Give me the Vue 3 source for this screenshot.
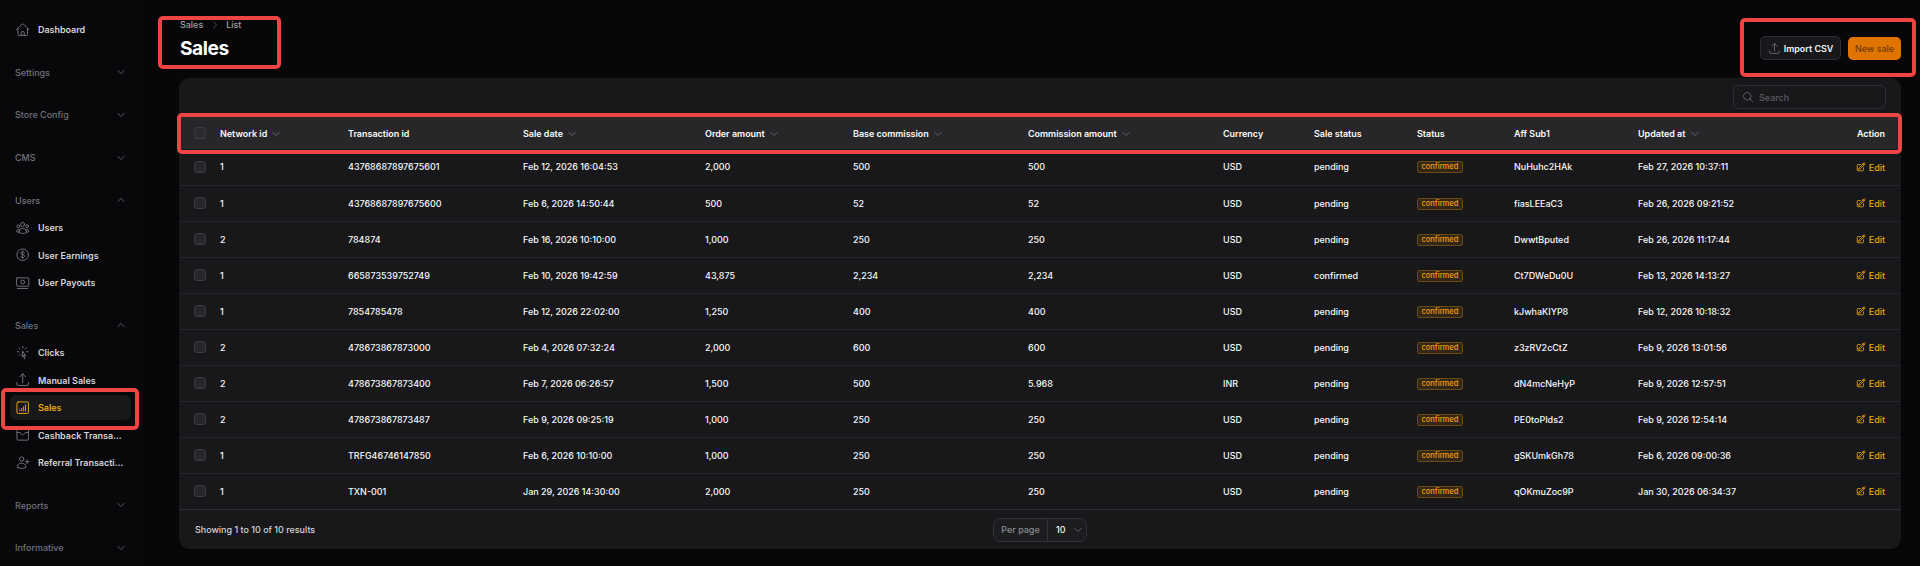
<template>
  <div class="layout">
    <aside class="sidebar">
      <div class="nav-item dash">
        <svg class="nav-icon" viewBox="0 0 24 24"><path :d="icons.home" /></svg>
        <span class="nav-text">Dashboard</span>
      </div>
      <div v-for="group in groups" :key="group.label" class="group">
        <div class="group-head">
          <span>{{ group.label }}</span>
          <svg class="chev" :class="{ up: group.items }" viewBox="0 0 24 24"><path d="M19.5 8.25l-7.5 7.5-7.5-7.5" /></svg>
        </div>
        <div v-for="item in group.items" :key="item.text" class="nav-item" :class="{ active: item.active }">
          <svg class="nav-icon" viewBox="0 0 24 24"><path :d="icons[item.icon]" /></svg>
          <span class="nav-text">{{ item.text }}</span>
        </div>
      </div>
    </aside>

    <main class="main">
      <header class="page-head">
        <div class="title-block">
          <div class="crumbs">
            <span>Sales</span>
            <svg class="crumb-sep" viewBox="0 0 24 24"><path d="M8.25 4.5l7.5 7.5-7.5 7.5" /></svg>
            <span>List</span>
          </div>
          <h1>Sales</h1>
        </div>
        <div class="actions">
          <button class="btn btn-import">
            <svg class="btn-icon" viewBox="0 0 24 24"><path :d="icons.upload" /></svg>
            Import CSV
          </button>
          <button class="btn btn-new">New sale</button>
        </div>
      </header>

      <section class="card">
        <div class="toolbar">
          <div class="search">
            <svg class="search-icon" viewBox="0 0 24 24"><path d="M21 21l-5.197-5.197m0 0A7.5 7.5 0 105.196 5.196a7.5 7.5 0 0010.607 10.607z" /></svg>
            <span>Search</span>
          </div>
        </div>

        <table class="table">
          <colgroup>
            <col v-for="(w, i) in colWidths" :key="i" :style="{ width: w + 'px' }" />
          </colgroup>
          <thead>
            <tr>
              <th class="check-cell"><span class="check"></span></th>
              <th v-for="col in columns" :key="col.label" :class="{ right: col.right }">
                {{ col.label }}
                <svg v-if="col.sort" class="sort" viewBox="0 0 24 24"><path d="M19.5 8.25l-7.5 7.5-7.5-7.5" /></svg>
              </th>
            </tr>
          </thead>
          <tbody>
            <tr v-for="row in rows" :key="row[1]">
              <td class="check-cell"><span class="check"></span></td>
              <td>{{ row[0] }}</td>
              <td>{{ row[1] }}</td>
              <td>{{ row[2] }}</td>
              <td>{{ row[3] }}</td>
              <td>{{ row[4] }}</td>
              <td>{{ row[5] }}</td>
              <td>{{ row[6] }}</td>
              <td>{{ row[7] }}</td>
              <td><span class="badge">confirmed</span></td>
              <td>{{ row[8] }}</td>
              <td>{{ row[9] }}</td>
              <td class="right">
                <span class="edit">
                  <svg class="edit-icon" viewBox="0 0 24 24"><path :d="icons.edit" /></svg>Edit
                </span>
              </td>
            </tr>
          </tbody>
        </table>

        <footer class="card-foot">
          <span class="showing">Showing 1 to 10 of 10 results</span>
          <div class="per-page">
            <span class="per-label">Per page</span>
            <span class="per-value">10
              <svg class="per-chev" viewBox="0 0 24 24"><path d="M19.5 8.25l-7.5 7.5-7.5-7.5" /></svg>
            </span>
          </div>
          <span class="foot-spacer"></span>
        </footer>
      </section>

      <div class="mark mark-title"></div>
      <div class="mark mark-actions"></div>
      <div class="mark mark-head"></div>
    </main>
    <div class="mark mark-nav"></div>
  </div>
</template>

<script setup>
const icons = {
  home: 'M2.25 12l8.954-8.955c.44-.439 1.152-.439 1.591 0L21.75 12M4.5 9.75v10.125c0 .621.504 1.125 1.125 1.125H9.75v-4.875c0-.621.504-1.125 1.125-1.125h2.25c.621 0 1.125.504 1.125 1.125V21h4.125c.621 0 1.125-.504 1.125-1.125V9.75M8.25 21h8.25',
  users: 'M18 18.72a9.094 9.094 0 003.741-.479 3 3 0 00-4.682-2.72m.94 3.198l.001.031c0 .225-.012.447-.037.666A11.944 11.944 0 0112 21c-2.17 0-4.207-.576-5.963-1.584A6.062 6.062 0 016 18.719m12 0a5.971 5.971 0 00-.941-3.197m0 0A5.995 5.995 0 0012 12.75a5.995 5.995 0 00-5.058 2.772m0 0a3 3 0 00-4.681 2.72 8.986 8.986 0 003.74.477m.94-3.197a5.971 5.971 0 00-.94 3.197M15 6.75a3 3 0 11-6 0 3 3 0 016 0zm6 3a2.25 2.25 0 11-4.5 0 2.25 2.25 0 014.5 0zm-13.5 0a2.25 2.25 0 11-4.5 0 2.25 2.25 0 014.5 0z',
  dollar: 'M12 6v12m-3-2.818l.879.659c1.171.879 3.07.879 4.242 0 1.172-.879 1.172-2.303 0-3.182C13.536 12.219 12.768 12 12 12c-.725 0-1.45-.22-2.003-.659-1.106-.879-1.106-2.303 0-3.182s2.9-.879 4.006 0l.415.33M21 12a9 9 0 11-18 0 9 9 0 0118 0z',
  payout: 'M3.5 4.5h17a1 1 0 011 1v11a1 1 0 01-1 1h-17a1 1 0 01-1-1v-11a1 1 0 011-1zM15 11a3 3 0 11-6 0 3 3 0 016 0zM4 21h16',
  clicks: 'M15.042 21.672L13.684 16.6m0 0l-2.51 2.225.569-9.47 5.227 7.917-3.286-.672zM12 2.25V4.5m5.834.166l-1.591 1.591M20.25 10.5H18M7.757 14.743l-1.59 1.59M6 10.5H3.75m4.007-4.243l-1.59-1.59',
  upload: 'M3 16.5v2.25A2.25 2.25 0 005.25 21h13.5A2.25 2.25 0 0021 18.75V16.5m-13.5-9L12 3m0 0l4.5 4.5M12 3v13.5',
  chart: 'M5 3h14a2 2 0 012 2v14a2 2 0 01-2 2H5a2 2 0 01-2-2V5a2 2 0 012-2zM7.5 17v-1.5M10.5 17v-4M13.5 17v-6.5M16.5 17V7.5',
  cashback: 'M5 3.5h14a2 2 0 012 2v13a2 2 0 01-2 2H5a2 2 0 01-2-2v-13a2 2 0 012-2zM3 8.5h5c.5 2.2 2 3.5 4 3.5s3.5-1.3 4-3.5h5',
  userPlus: 'M19 7.5v3m0 0v3m0-3h3m-3 0h-3m-2.25-4.125a3.375 3.375 0 11-6.75 0 3.375 3.375 0 016.75 0zM4 19.235v-.11a6.375 6.375 0 0112.75 0v.109A12.318 12.318 0 0110.374 21c-2.331 0-4.512-.645-6.374-1.766z',
  edit: 'M16.862 4.487l1.687-1.688a1.875 1.875 0 112.652 2.652L10.582 16.07a4.5 4.5 0 01-1.897 1.13L6 18l.8-2.685a4.5 4.5 0 011.13-1.897l8.932-8.931zm0 0L19.5 7.125M18 14v4.75A2.25 2.25 0 0115.75 21H5.25A2.25 2.25 0 013 18.75V8.25A2.25 2.25 0 015.25 6H10'
}

const groups = [
  { label: 'Settings' },
  { label: 'Store Config' },
  { label: 'CMS' },
  {
    label: 'Users',
    items: [
      { text: 'Users', icon: 'users' },
      { text: 'User Earnings', icon: 'dollar' },
      { text: 'User Payouts', icon: 'payout' }
    ]
  },
  {
    label: 'Sales',
    items: [
      { text: 'Clicks', icon: 'clicks' },
      { text: 'Manual Sales', icon: 'upload' },
      { text: 'Sales', icon: 'chart', active: true },
      { text: 'Cashback Transactions', icon: 'cashback' },
      { text: 'Referral Transactions', icon: 'userPlus' }
    ]
  },
  { label: 'Reports' },
  { label: 'Informative' }
]

const colWidths = [29, 128, 175, 182, 148, 175, 195, 91, 103, 97, 124, 180, 95]

const columns = [
  { label: 'Network id', sort: true },
  { label: 'Transaction id' },
  { label: 'Sale date', sort: true },
  { label: 'Order amount', sort: true },
  { label: 'Base commission', sort: true },
  { label: 'Commission amount', sort: true },
  { label: 'Currency' },
  { label: 'Sale status' },
  { label: 'Status' },
  { label: 'Aff Sub1' },
  { label: 'Updated at', sort: true },
  { label: 'Action', right: true }
]

const rows = [
  ['1', '43768687897675601', 'Feb 12, 2026 16:04:53', '2,000', '500', '500', 'USD', 'pending', 'NuHuhc2HAk', 'Feb 27, 2026 10:37:11'],
  ['1', '43768687897675600', 'Feb 6, 2026 14:50:44', '500', '52', '52', 'USD', 'pending', 'fiasLEEaC3', 'Feb 26, 2026 09:21:52'],
  ['2', '784874', 'Feb 16, 2026 10:10:00', '1,000', '250', '250', 'USD', 'pending', 'DwwtBputed', 'Feb 26, 2026 11:17:44'],
  ['1', '665873539752749', 'Feb 10, 2026 19:42:59', '43,875', '2,234', '2,234', 'USD', 'confirmed', 'Ct7DWeDu0U', 'Feb 13, 2026 14:13:27'],
  ['1', '7854785478', 'Feb 12, 2026 22:02:00', '1,250', '400', '400', 'USD', 'pending', 'kJwhaKIYP8', 'Feb 12, 2026 10:18:32'],
  ['2', '478673867873000', 'Feb 4, 2026 07:32:24', '2,000', '600', '600', 'USD', 'pending', 'z3zRV2cCtZ', 'Feb 9, 2026 13:01:56'],
  ['2', '478673867873400', 'Feb 7, 2026 06:26:57', '1,500', '500', '5.968', 'INR', 'pending', 'dN4mcNeHyP', 'Feb 9, 2026 12:57:51'],
  ['2', '478673867873487', 'Feb 9, 2026 09:25:19', '1,000', '250', '250', 'USD', 'pending', 'PE0toPIds2', 'Feb 9, 2026 12:54:14'],
  ['1', 'TRFG46746147850', 'Feb 6, 2026 10:10:00', '1,000', '250', '250', 'USD', 'pending', 'gSKUmkGh78', 'Feb 6, 2026 09:00:36'],
  ['1', 'TXN-001', 'Jan 29, 2026 14:30:00', '2,000', '250', '250', 'USD', 'pending', 'qOKmuZoc9P', 'Jan 30, 2026 06:34:37']
]
</script>

<style>
html,
body {
  margin: 0;
  background: #09090b;
}
</style>

<style scoped>
.layout {
  position: relative;
  display: flex;
  height: 566px;
  overflow: hidden;
  background: #070709;
  font-family: Inter, "Liberation Sans", sans-serif;
  font-size: 8.96px;
  font-weight: 500;
  color: #f8f8f9;
}

svg {
  fill: none;
  stroke: currentColor;
  stroke-width: 1.5;
  stroke-linecap: round;
  stroke-linejoin: round;
  flex: none;
}

.sidebar {
  width: 141px;
  flex: none;
  padding: 17px 10px 0;
  box-sizing: border-box;
  background: #08080b;
}

.group {
  display: flex;
  flex-direction: column;
  gap: 1.9px;
  margin-top: 17px;
}

.group-head {
  display: flex;
  align-items: center;
  justify-content: space-between;
  height: 25.6px;
  padding: 0 5px;
  color: #71717a;
}

.chev {
  width: 10px;
  height: 10px;
  color: #71717a;
  stroke-width: 1.8;
}

.chev.up {
  transform: rotate(180deg);
}

.nav-item {
  display: flex;
  align-items: center;
  gap: 7.6px;
  height: 25.6px;
  padding: 0 5px;
  border-radius: 6px;
  color: #d4d4d8;
  font-weight: 600;
  min-width: 0;
}

.nav-item.active {
  background: #18181b;
  color: #eaa900;
}

.nav-text {
  overflow: hidden;
  white-space: nowrap;
  text-overflow: ellipsis;
}

.nav-icon {
  width: 15.4px;
  height: 15.4px;
  color: #71717a;
}

.active .nav-icon {
  color: #eaa900;
}

.main {
  flex: 1;
  min-width: 0;
  padding: 0 19px 0 38px;
}

.page-head {
  display: flex;
  align-items: flex-end;
  justify-content: space-between;
  height: 78px;
  padding-bottom: 18px;
  box-sizing: border-box;
}

.title-block {
  padding-left: 1px;
}

.crumbs {
  display: flex;
  align-items: center;
  gap: 6.5px;
  color: #a1a1aa;
  line-height: 14px;
  margin-bottom: 4px;
}

.crumb-sep {
  width: 10px;
  height: 10px;
  color: #71717a;
}

h1 {
  margin: 0;
  font-size: 19.2px;
  line-height: 24px;
  font-weight: 700;
  letter-spacing: -0.48px;
  color: #fff;
}

.actions {
  display: flex;
  align-items: center;
  gap: 7px;
}

.btn {
  display: inline-flex;
  align-items: center;
  justify-content: center;
  height: 23px;
  box-sizing: border-box;
  border-radius: 5px;
  font: inherit;
  white-space: nowrap;
  padding: 0;
}

.btn-import {
  gap: 3px;
  width: 81px;
  height: 24px;
  background: #18181b;
  border: 1px solid #2b2b30;
  color: #f4f4f5;
  font-weight: 600;
}

.btn-icon {
  width: 13px;
  height: 13px;
  color: #71717a;
}

.btn-new {
  width: 53px;
  background: #e07400;
  border: 0;
  color: #6f3a08;
}

.card {
  height: 471px;
  background: #18181b;
  border-radius: 10px;
  overflow: hidden;
}

.toolbar {
  display: flex;
  justify-content: flex-end;
  height: 39px;
  padding: 7px 15px 0;
  box-sizing: border-box;
}

.search {
  display: flex;
  align-items: center;
  gap: 5px;
  width: 153px;
  height: 24px;
  padding: 0 8px;
  box-sizing: border-box;
  border: 1px solid #2f2f34;
  border-radius: 6px;
  color: #5b5b63;
}

.search-icon {
  width: 12px;
  height: 12px;
  color: #71717a;
}

.table {
  width: 1722px;
  table-layout: fixed;
  border-collapse: collapse;
}

th,
td {
  padding: 0 12px;
  text-align: left;
  white-space: nowrap;
}

th {
  height: 32px;
  background: #27272a;
  font-weight: 600;
  color: #fafafa;
}

td {
  height: 36px;
  border-bottom: 1px solid #26262a;
  box-sizing: border-box;
}

tbody tr:last-child td {
  border-bottom-color: #2f2f33;
}

.check-cell {
  padding: 0 0 0 15px;
}

.check {
  display: block;
  width: 12px;
  height: 12px;
  box-sizing: border-box;
  border: 1px solid #3a3a3f;
  border-radius: 3px;
  background: #27272a;
}

th .check {
  background: #2c2c30;
}

.right {
  text-align: right;
  padding-right: 16px;
}

.sort {
  width: 10px;
  height: 10px;
  margin-left: 2px;
  color: #71717a;
  stroke-width: 2;
  vertical-align: -2px;
}

.badge {
  display: inline-block;
  padding: 0 3.5px;
  height: 12px;
  line-height: 10px;
  box-sizing: border-box;
  font-size: 7.5px;
  border: 1px solid rgba(245, 158, 11, 0.3);
  border-radius: 3px;
  background: rgba(245, 158, 11, 0.12);
  color: #f59e0b;
}

.edit {
  display: inline-flex;
  align-items: center;
  gap: 3px;
  color: #eaa900;
  transform: translateY(1px);
}

.edit-icon {
  width: 10px;
  height: 10px;
  stroke-width: 2;
}

.card-foot {
  display: grid;
  grid-template-columns: 1fr auto 1fr;
  align-items: center;
  height: 40px;
  padding: 0 16px;
  color: #d4d4d8;
}

.per-page {
  display: flex;
  align-items: center;
  height: 24px;
  width: 94px;
  box-sizing: border-box;
  border: 1px solid #323237;
  border-radius: 7px;
  background: #1d1d20;
}

.per-label {
  width: 53px;
  text-align: center;
  color: #8b8b93;
}

.per-value {
  display: flex;
  align-items: center;
  gap: 7px;
  height: 100%;
  padding-left: 8px;
  border-left: 1px solid #323237;
  color: #f4f4f5;
}

.per-chev {
  width: 10px;
  height: 10px;
  color: #8b8b93;
}

.mark {
  position: absolute;
  box-sizing: border-box;
  border: 4px solid #ef4444;
  border-radius: 5px;
  pointer-events: none;
}

.mark-title {
  left: 158px;
  top: 16px;
  width: 123px;
  height: 53px;
}

.mark-actions {
  left: 1740px;
  top: 18px;
  width: 176px;
  height: 59px;
}

.mark-head {
  left: 177px;
  top: 113px;
  width: 1725px;
  height: 41px;
}

.mark-nav {
  left: 1px;
  top: 388px;
  width: 138px;
  height: 42px;
}
</style>
